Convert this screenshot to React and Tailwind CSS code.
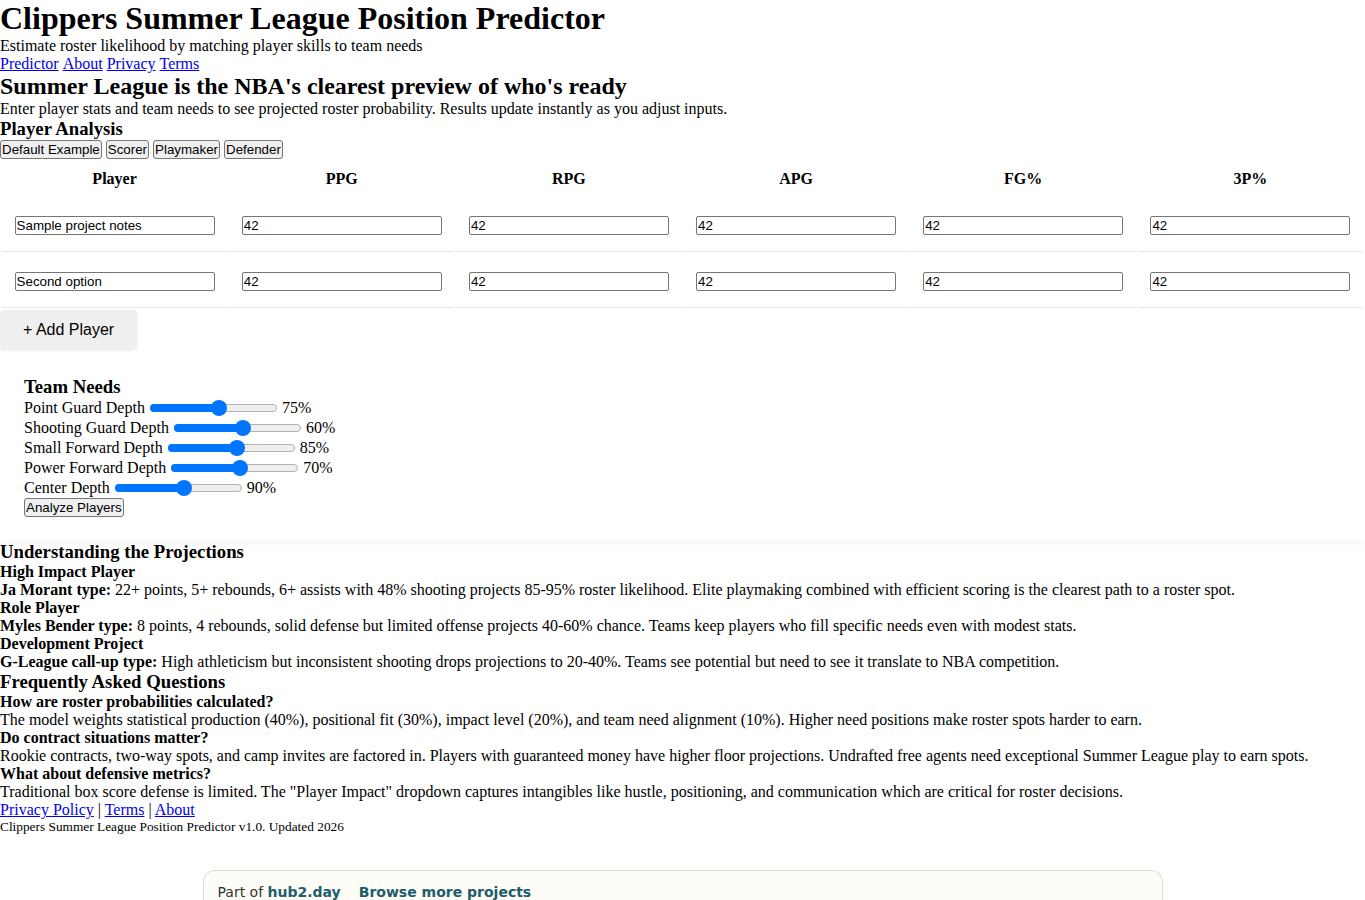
import React from "react";

const players = [
  { name: "Sample project notes", stats: ["42", "42", "42", "42", "42"] },
  { name: "Second option", stats: ["42", "42", "42", "42", "42"] },
];

const columns = ["Player", "PPG", "RPG", "APG", "FG%", "3P%"];

const needs = [
  { label: "Point Guard Depth", value: "75%" },
  { label: "Shooting Guard Depth", value: "60%" },
  { label: "Small Forward Depth", value: "85%" },
  { label: "Power Forward Depth", value: "70%" },
  { label: "Center Depth", value: "90%" },
];

function FormButton({ children }) {
  return (
    <button className="h-[19px] px-[1px] py-[1px] border border-[#767676] rounded-[3px] bg-[#efefef] text-black font-['Liberation_Sans',Arial,sans-serif] text-[13.333px] leading-[normal]">
      {children}
    </button>
  );
}

function TextBox({ value }) {
  return (
    <input
      defaultValue={value}
      className="block mx-auto w-[200px] h-[19px] px-[1px] border border-[#767676] rounded-[2px] bg-white text-black font-['Liberation_Sans',Arial,sans-serif] text-[13.333px] leading-[normal]"
    />
  );
}

// Range-style slider: filled track up to the thumb
function DepthSlider() {
  const thumb = 68;
  return (
    <span className="relative inline-block w-[127px] h-[8px] rounded-full bg-[#efefef] border border-[#b2b2b2] shrink-0">
      <span
        className="absolute left-[-1px] top-[-1px] h-[8px] rounded-full bg-[#0075ff]"
        style={{ width: thumb }}
      />
      <span
        className="absolute top-1/2 w-[16px] h-[16px] -translate-y-1/2 -translate-x-1/2 rounded-full bg-[#0075ff]"
        style={{ left: thumb }}
      />
    </span>
  );
}

export default function App() {
  return (
    <div className="h-[900px] overflow-hidden bg-white text-black font-['Liberation_Serif','Times_New_Roman',serif] text-[16px] leading-[normal]">
      <h1 className="text-[32px] font-bold">Clippers Summer League Position Predictor</h1>
      <p>Estimate roster likelihood by matching player skills to team needs</p>
      <nav className="flex gap-[4px]">
        <a href="#" className="text-[#0000ee] underline">Predictor</a>
        <a href="#" className="text-[#0000ee] underline">About</a>
        <a href="#" className="text-[#0000ee] underline">Privacy</a>
        <a href="#" className="text-[#0000ee] underline">Terms</a>
      </nav>

      <h2 className="text-[24px] font-bold">Summer League is the NBA's clearest preview of who's ready</h2>
      <p>Enter player stats and team needs to see projected roster probability. Results update instantly as you adjust inputs.</p>

      <h3 className="text-[18.72px] font-bold">Player Analysis</h3>
      <div className="flex items-start h-[20px] gap-[4px]">
        <FormButton>Default Example</FormButton>
        <FormButton>Scorer</FormButton>
        <FormButton>Playmaker</FormButton>
        <FormButton>Defender</FormButton>
      </div>

      <table className="w-full table-fixed border-separate border-spacing-[2px]">
        <thead>
          <tr>
            {columns.map((c) => (
              <th key={c} className="pt-[8px] pb-[8px] text-center font-bold">
                {c}
              </th>
            ))}
          </tr>
        </thead>
        <tbody>
          {players.map((p) => (
            <tr key={p.name}>
              <td className="pt-[18px] pb-[16px] border-b border-[#e8e8e8]">
                <TextBox value={p.name} />
              </td>
              {p.stats.map((s, i) => (
                <td key={i} className="pt-[18px] pb-[16px] border-b border-[#e8e8e8]">
                  <TextBox value={s} />
                </td>
              ))}
            </tr>
          ))}
        </tbody>
      </table>

      <button className="h-[40px] px-[23px] rounded-[4px] bg-[#efefef] text-black font-['Liberation_Sans',Arial,sans-serif] text-[16px] leading-[normal] shadow-[0_1px_3px_rgba(0,0,0,0.06)]">
        + Add Player
      </button>

      <section className="bg-white pt-[26px] pb-[24px] px-[24px] shadow-[0_2px_6px_rgba(0,0,0,0.05)]">
        <h3 className="text-[18.72px] font-bold">Team Needs</h3>
        {needs.map((n) => (
          <div key={n.label} className="flex items-center h-[20px] gap-[5px]">
            <span>{n.label}</span>
            <DepthSlider />
            <span>{n.value}</span>
          </div>
        ))}
        <FormButton>Analyze Players</FormButton>
      </section>

      <h3 className="text-[18.72px] font-bold">Understanding the Projections</h3>
      <h4 className="font-bold">High Impact Player</h4>
      <p>
        <strong className="font-bold">Ja Morant type:</strong> 22+ points, 5+ rebounds, 6+ assists with 48% shooting projects 85-95% roster likelihood. Elite playmaking combined with efficient scoring is the clearest path to a roster spot.
      </p>
      <h4 className="font-bold">Role Player</h4>
      <p>
        <strong className="font-bold">Myles Bender type:</strong> 8 points, 4 rebounds, solid defense but limited offense projects 40-60% chance. Teams keep players who fill specific needs even with modest stats.
      </p>
      <h4 className="font-bold">Development Project</h4>
      <p>
        <strong className="font-bold">G-League call-up type:</strong> High athleticism but inconsistent shooting drops projections to 20-40%. Teams see potential but need to see it translate to NBA competition.
      </p>

      <h3 className="text-[18.72px] font-bold">Frequently Asked Questions</h3>
      <h4 className="font-bold">How are roster probabilities calculated?</h4>
      <p>The model weights statistical production (40%), positional fit (30%), impact level (20%), and team need alignment (10%). Higher need positions make roster spots harder to earn.</p>
      <h4 className="font-bold">Do contract situations matter?</h4>
      <p>Rookie contracts, two-way spots, and camp invites are factored in. Players with guaranteed money have higher floor projections. Undrafted free agents need exceptional Summer League play to earn spots.</p>
      <h4 className="font-bold">What about defensive metrics?</h4>
      <p>Traditional box score defense is limited. The "Player Impact" dropdown captures intangibles like hustle, positioning, and communication which are critical for roster decisions.</p>

      <footer>
        <p>
          <a href="#" className="text-[#0000ee] underline">Privacy Policy</a> |{" "}
          <a href="#" className="text-[#0000ee] underline">Terms</a> |{" "}
          <a href="#" className="text-[#0000ee] underline">About</a>
        </p>
        <p className="text-[13.333px]">Clippers Summer League Position Predictor v1.0. Updated 2026</p>
      </footer>

      <div className="mt-[35px] mx-auto w-[960px] h-[40px] rounded-t-[12px] border border-b-0 border-[#dedbd3] bg-[#fdfcf6] pl-[14px] pt-[13px] font-['DejaVu_Sans',sans-serif] text-[14px] leading-[normal]">
        <span className="text-[#333333]">Part of </span>
        <span className="font-bold text-[#1e5d6e]">hub2.day</span>
        <span className="ml-[18px] font-bold text-[#1e5d6e]">Browse more projects</span>
      </div>
    </div>
  );
}
